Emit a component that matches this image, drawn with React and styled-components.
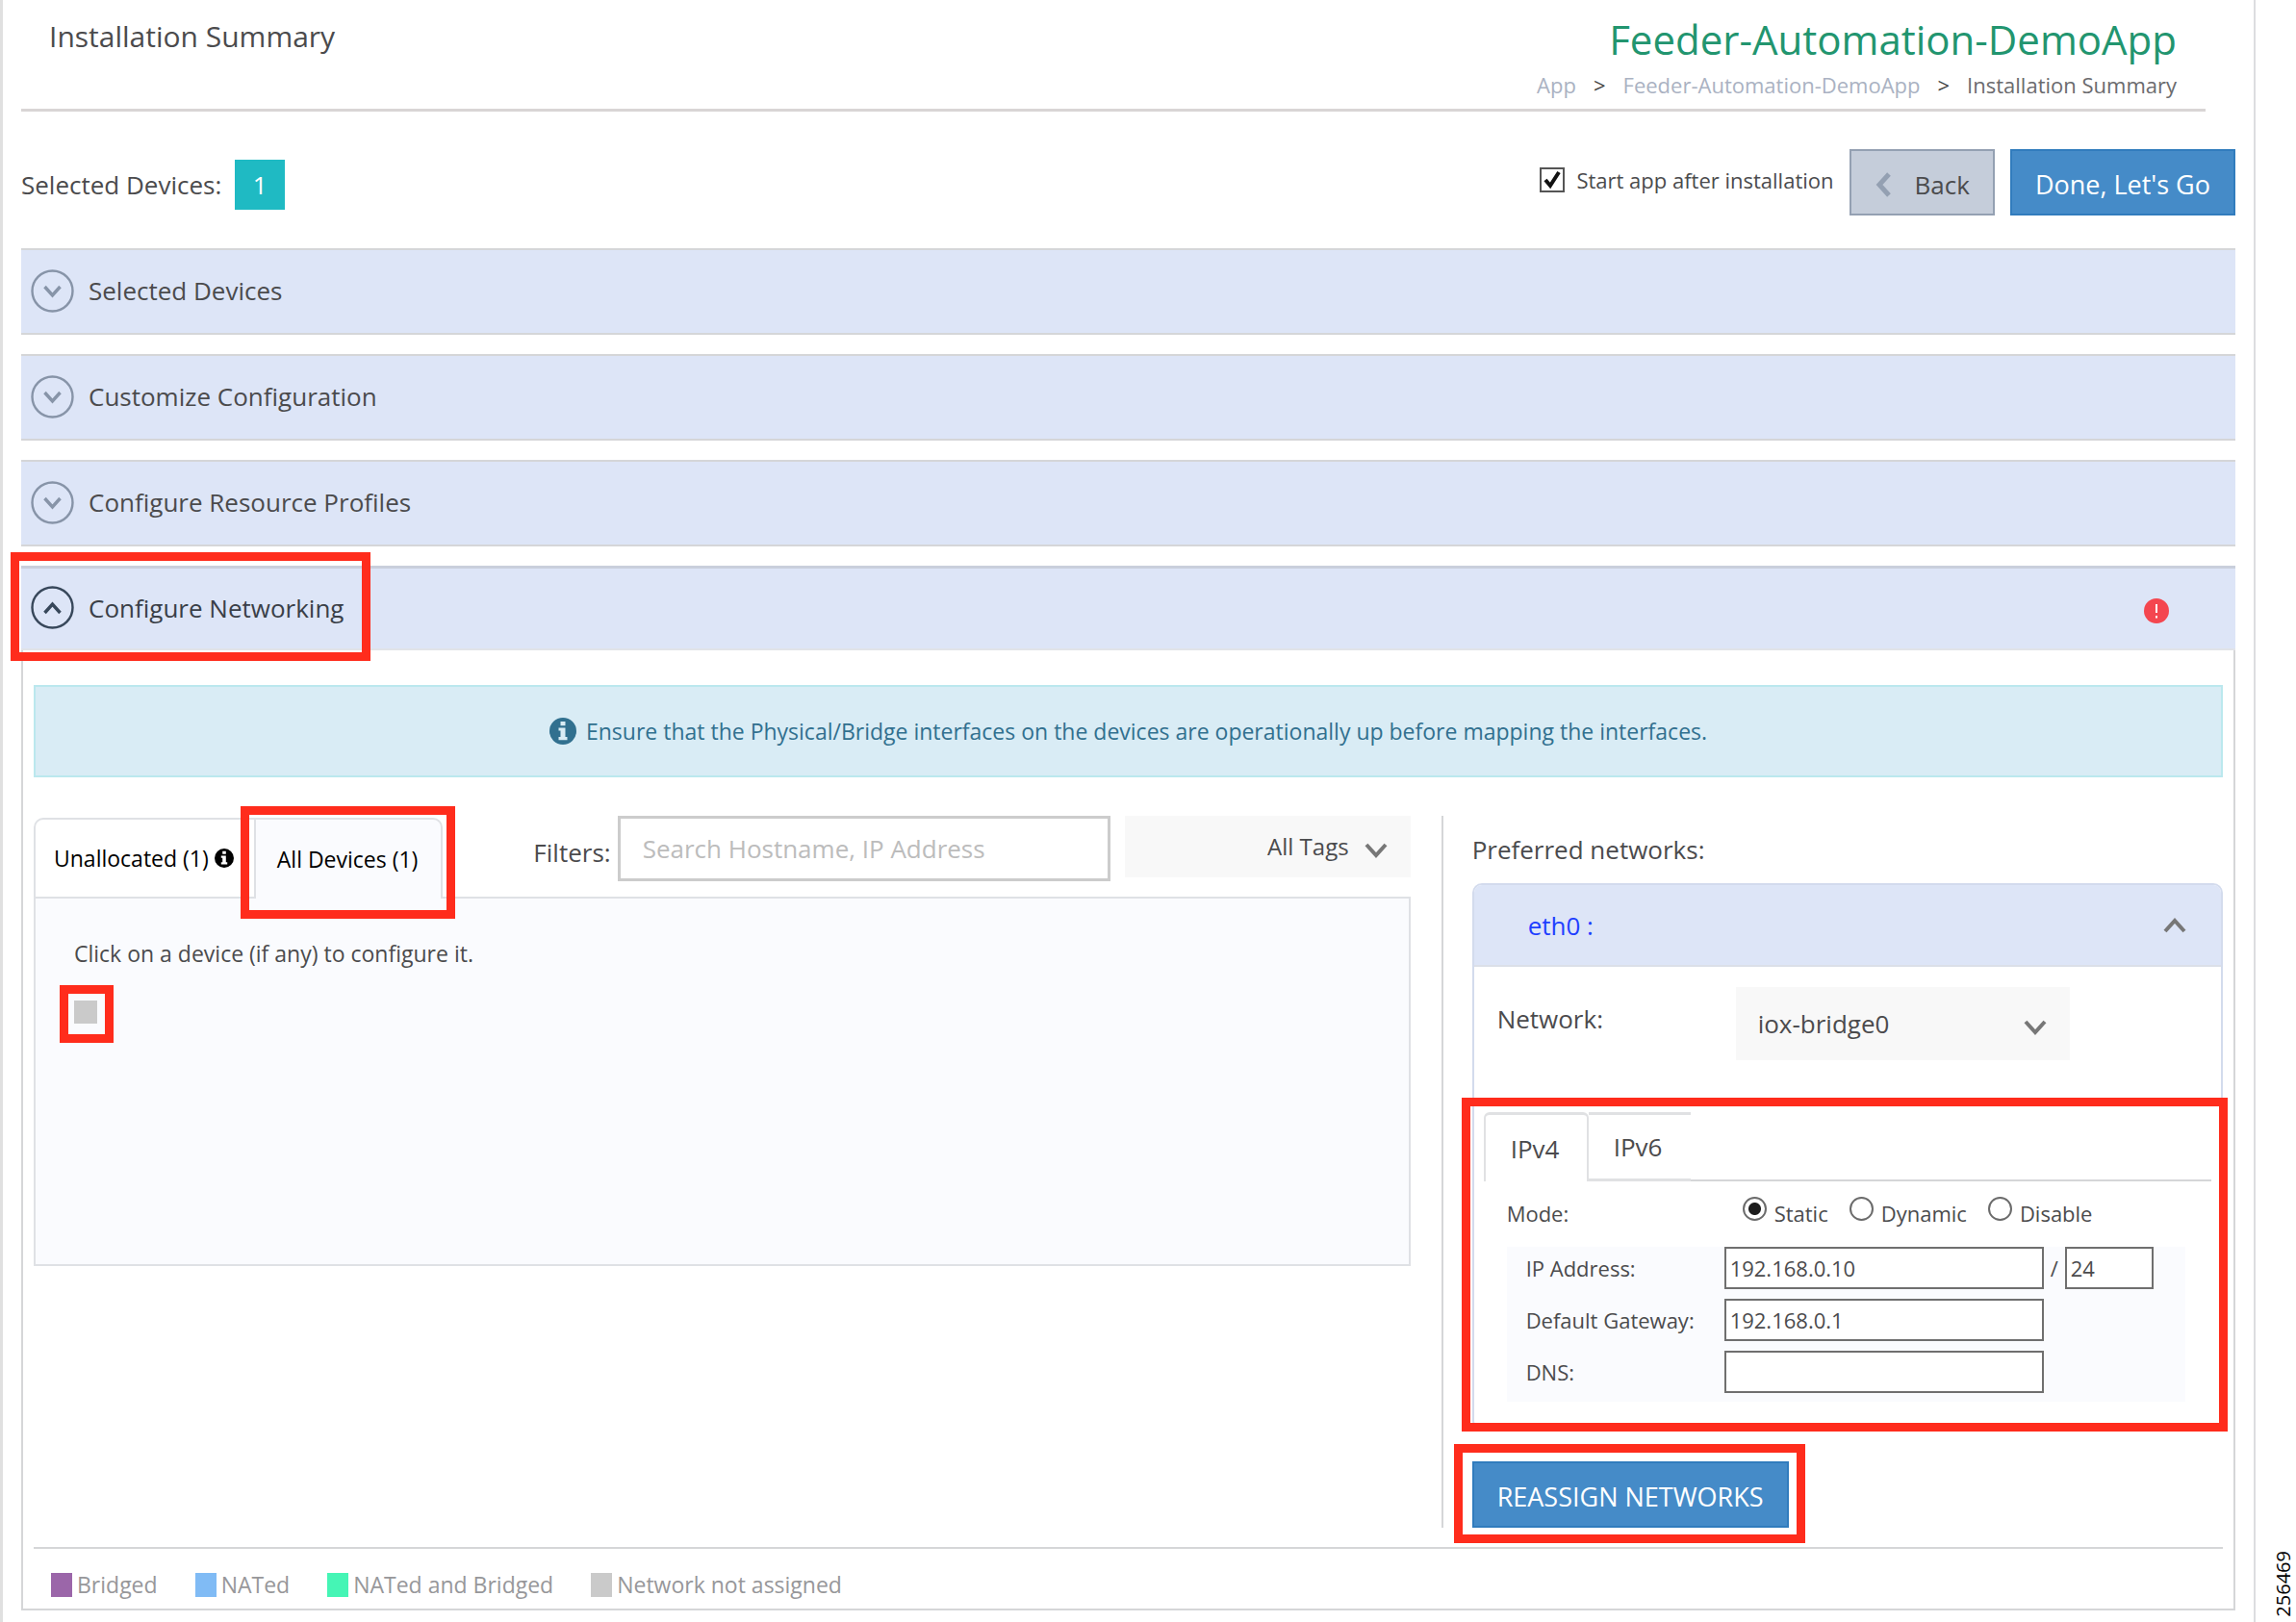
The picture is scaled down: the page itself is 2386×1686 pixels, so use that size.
import React, { useState } from "react";
import styled, { createGlobalStyle, css } from "styled-components";

const GlobalStyle = createGlobalStyle`
  *, *::before, *::after { box-sizing: border-box; }
  body {
    margin: 0;
    background: #fff;
    color: #4b4b4d;
    font-family: "Open Sans", "Noto Sans", sans-serif;
    font-size: 26px;
    line-height: 36px;
  }
  button, input, select { font: inherit; color: inherit; margin: 0; }
  button { cursor: pointer; }
`;

const Page = styled.div`
  display: flex;
  min-height: 100vh;
`;

const Frame = styled.main`
  flex: 1;
  min-width: 0;
  padding: 0 19px 12px;
  border-left: 3px solid #e0e0e0;
  border-right: 2px solid #dcdde0;
`;

const SideNote = styled.aside`
  width: 42px;
  padding: 0 0 5px 16px;
  display: flex;
  align-items: flex-end;
`;

const FigureNumber = styled.span`
  writing-mode: vertical-rl;
  transform: rotate(180deg);
  color: #000;
  font-size: 20px;
  line-height: 26px;
`;

/* Header */

const Header = styled.header`
  display: flex;
  justify-content: space-between;
  margin-right: 31px;
  padding: 11px 30px 10px 29px;
  border-bottom: 3px solid #d9d5d5;
`;

const PageTitle = styled.h1`
  margin: 7px 0 0;
  font-size: 30px;
  line-height: 40px;
  font-weight: 400;
`;

const AppHeading = styled.div`
  display: flex;
  flex-direction: column;
  align-items: flex-end;
  gap: 2px;
`;

const AppName = styled.h2`
  margin: 0;
  color: #22956f;
  font-size: 42px;
  line-height: 60px;
  font-weight: 400;
`;

const Breadcrumb = styled.nav`
  display: flex;
  gap: 18px;
  color: #6b6b6e;
  font-size: 22px;
  line-height: 30px;
`;

const CrumbLink = styled.a`
  color: #aab2c2;
  text-decoration: none;
`;

const CrumbArrow = styled.span`
  color: #444;
`;

/* Toolbar */

const Toolbar = styled.div`
  display: flex;
  justify-content: space-between;
  margin: 39px 0 34px;
`;

const DeviceCount = styled.div`
  display: flex;
  align-items: center;
  gap: 14px;
  padding-top: 4px;
`;

const Badge = styled.span`
  width: 52px;
  height: 52px;
  line-height: 52px;
  text-align: center;
  color: #fff;
  background: #1fbac3;
`;

const Actions = styled.div`
  display: flex;
  align-items: center;
  gap: 16px;
`;

const CheckLabel = styled.label`
  display: flex;
  align-items: center;
  gap: 12px;
  margin-bottom: 5px;
  font-size: 22px;
  line-height: 30px;
`;

const Checkbox = styled.input`
  appearance: none;
  width: 26px;
  height: 26px;
  border: 2px solid #555;
  background: #fff;
  &:checked {
    background: #fff
      url("data:image/svg+xml,%3Csvg xmlns='http://www.w3.org/2000/svg' viewBox='0 0 22 22'%3E%3Cpath d='M4 11l5 6 9-14' fill='none' stroke='%23111' stroke-width='4'/%3E%3C/svg%3E")
      center / 22px 22px no-repeat;
  }
`;

const Button = styled.button`
  display: flex;
  align-items: center;
  gap: 24px;
  height: 69px;
  padding: 4px 24px 0;
  border: 2px solid #317cbd;
  background: #458bc8;
  color: #fff;
  font-size: 27px;
  ${(p) =>
    p.$variant === "secondary" &&
    css`
      border-color: #94a0b2;
      background: #c5cdda;
      color: #4b4b4d;
      font-size: 26px;
    `}
`;

/* Accordion */

const Accordion = styled.div`
  display: flex;
  flex-direction: column;
  gap: 20px;
`;

const SectionHeader = styled.button`
  display: flex;
  align-items: center;
  gap: 15px;
  width: 100%;
  height: 90px;
  padding: 0 69px 2px 10px;
  border: solid #d5d6d8;
  border-width: 2px 0;
  background: #dde5f7;
  text-align: left;
  ${(p) =>
    p.$open &&
    css`
      height: 88px;
      border-top: 3px solid #c9cfdc;
      border-bottom-color: #e1e3e8;
      color: #3a3f48;
    `}
`;

const HeadingRow = styled.span`
  display: flex;
  align-items: center;
  gap: 15px;
`;

const ToggleIcon = styled.svg`
  width: 45px;
  height: 45px;
  flex: none;
  color: ${(p) => (p.$open ? "#37475a" : "#8794a8")};
`;

const ErrorIcon = styled.svg`
  width: 26px;
  height: 26px;
  margin: 7px 0 0 auto;
`;

const SectionBody = styled.section`
  padding: 36px 11px 0;
  border: 2px solid #d5d6d8;
  border-top: 0;
`;

const Highlighted = styled.div`
  position: relative;
  flex: none;
`;

const Highlight = styled.span`
  position: absolute;
  inset: ${(p) => p.$inset};
  z-index: 1;
  border: 9px solid #ff2c1c;
  pointer-events: none;
`;

const Notice = styled.p`
  display: flex;
  align-items: center;
  justify-content: center;
  gap: 10px;
  height: 96px;
  margin: 0;
  border: 2px solid #bbe8ee;
  background: #d9ecf5;
  color: #31708f;
  font-size: 23px;
`;

const InfoIcon = styled.svg`
  width: ${(p) => p.$size}px;
  height: ${(p) => p.$size}px;
  flex: none;
`;

const Columns = styled.div`
  display: grid;
  grid-template-columns: minmax(0, 1430fr) minmax(0, 812fr);
  gap: 32px;
  margin-top: 40px;
`;

/* Devices */

const DevicesBar = styled.div`
  display: flex;
  align-items: flex-start;
  justify-content: space-between;
  height: 84px;
`;

const DeviceTabs = styled.div`
  display: flex;
  align-self: flex-end;
  height: 82px;
`;

const DeviceTab = styled.button`
  display: flex;
  align-items: center;
  gap: 6px;
  height: ${(p) => (p.$active ? "84px" : "82px")};
  padding: ${(p) => (p.$active ? "0 24px 0 22px" : "0 21px 0 19px")};
  border: solid #dfe1e5;
  border-width: ${(p) => (p.$active ? "2px 2px 0" : "2px 0 0 2px")};
  border-radius: ${(p) => (p.$active ? "0 10px 0 0" : "10px 0 0 0")};
  background: ${(p) => (p.$active ? "#fafbfe" : "#fff")};
  color: #000;
  font-size: 23px;
`;

const Filters = styled.div`
  display: flex;
  align-items: flex-start;
  gap: 15px;
`;

const FilterLabel = styled.label`
  margin-right: -8px;
  line-height: 76px;
`;

const SearchInput = styled.input`
  width: 512px;
  height: 68px;
  padding: 0 23px;
  border: 3px solid #cccccc;
  background: #fff;
  &::placeholder { color: #bcbcbc; opacity: 1; }
`;

const SelectWrap = styled.span`
  display: grid;
  align-items: center;
  width: ${(p) => p.$width}px;
  height: ${(p) => p.$height}px;
  background: #f8f8f8;
  & > * { grid-area: 1 / 1; }
`;

const Select = styled.select`
  appearance: none;
  width: 100%;
  height: 100%;
  border: 0;
  background: transparent;
  padding: ${(p) => (p.$alignEnd ? "0 64px 0 20px" : "0 64px 0 23px")};
  text-align-last: ${(p) => (p.$alignEnd ? "right" : "left")};
  font-size: ${(p) => (p.$alignEnd ? "24px" : "26px")};
`;

const Chevron = styled.svg`
  width: 24px;
  height: 16px;
  justify-self: end;
  margin: 8px 24px 0 0;
  color: #777;
  pointer-events: none;
`;

const DevicePanel = styled.div`
  min-height: 384px;
  padding: 42px 40px;
  border: 2px solid #dfe1e5;
  background: #fafbfe;
  font-size: 23px;
  line-height: 30px;
`;

const Hint = styled.p`
  margin: 0 0 34px;
`;

const DeviceSlot = styled(Highlighted)`
  width: 24px;
  height: 24px;
`;

const DeviceButton = styled.button`
  display: block;
  width: 24px;
  height: 24px;
  padding: 0;
  border: 0;
  background: #cacaca;
`;

/* Preferred networks */

const Networks = styled.div`
  padding: 17px 0 0 30px;
  border-left: 2px solid #d5d6d8;
`;

const NetworksTitle = styled.h3`
  margin: 0 0 17px;
  font-size: 26px;
  font-weight: 400;
`;

const Card = styled.div`
  margin-bottom: 32px;
  border: 2px solid #d3dbed;
  border-radius: 10px;
`;

const CardHeader = styled.button`
  display: flex;
  align-items: center;
  justify-content: space-between;
  width: 100%;
  height: 85px;
  padding: 0 36px 0 56px;
  border: 0;
  border-bottom: 2px solid #dbdfe8;
  border-radius: 8px 8px 0 0;
  background: #dde5f7;
  color: #1f3fff;
`;

const CardChevron = styled(Chevron)`
  margin: 0;
`;

const NetworkRow = styled.div`
  display: flex;
  align-items: center;
  padding: 21px 24px 54px;
`;

const NetworkLabel = styled.label`
  width: 248px;
  padding-bottom: 10px;
`;

const IpSection = styled(Highlighted)`
  padding-bottom: 28px;
`;

const IpTabs = styled.div`
  display: flex;
  height: 72px;
  margin: 0 10px;
  box-shadow: inset 0 -2px #d5d6d8;
`;

const IpTab = styled.button`
  width: ${(p) => (p.$active ? "109px" : "106px")};
  padding: 0 0 0 26px;
  text-align: left;
  background: #fff;
  border: solid #e0e1e3;
  border-width: 3px 0;
  ${(p) =>
    p.$active &&
    css`
      border-width: 3px 2px 0;
      border-radius: 6px 6px 0 0;
    `}
`;

const ModeRow = styled.div`
  display: flex;
  align-items: center;
  height: 68px;
  padding: 0 0 2px 34px;
  font-size: 22px;
  line-height: 30px;
`;

const ModeLabel = styled.span`
  width: 245px;
`;

const RadioGroup = styled.div`
  display: flex;
  gap: 22px;
`;

const RadioLabel = styled.label`
  display: flex;
  align-items: center;
  gap: 8px;
`;

const Radio = styled.input`
  appearance: none;
  width: 25px;
  height: 25px;
  && { margin-bottom: 10px; }
  border: 2px solid #6b6b6b;
  border-radius: 50%;
  background: #fff;
  &:checked {
    background: radial-gradient(circle, #1c1c1c 0 6px, #fff 7px);
  }
`;

const AddressForm = styled.div`
  display: flex;
  flex-direction: column;
  gap: 10px;
  margin: 0 37px 0 34px;
  padding: 0 0 9px 20px;
  background: #fafbfe;
  font-size: 22px;
`;

const FieldRow = styled.div`
  display: flex;
  align-items: center;
  gap: 7px;
`;

const FieldLabel = styled.label`
  width: 199px;
`;

const Field = styled.input`
  width: ${(p) => (p.$short ? "92px" : "332px")};
  height: 44px;
  padding: 0 4px;
  border: 2px solid #6f6f6f;
  background: #fff;
`;

const ReassignWrap = styled(Highlighted)`
  width: max-content;
`;

/* Legend */

const Legend = styled.ul`
  display: flex;
  gap: 39px;
  margin: 20px 0 0;
  padding: 22px 18px 10px;
  border-top: 2px solid #d5d6d8;
  list-style: none;
  color: #97979a;
  font-size: 23px;
  line-height: 30px;
`;

const LegendItem = styled.li`
  display: flex;
  align-items: center;
  gap: 5px;
  &::before {
    content: "";
    width: 22px;
    height: 25px;
    background: ${(p) => p.$color};
  }
`;

const SECTIONS = ["Selected Devices", "Customize Configuration", "Configure Resource Profiles"];

const LEGEND = [
  { label: "Bridged", color: "#9b66a9" },
  { label: "NATed", color: "#80bbf5" },
  { label: "NATed and Bridged", color: "#45f5b5" },
  { label: "Network not assigned", color: "#cacaca" },
];

const MODES = ["Static", "Dynamic", "Disable"];

function Toggle({ open }) {
  return (
    <ToggleIcon $open={open} viewBox="0 0 45 45" fill="none" stroke="currentColor" aria-hidden="true">
      <circle cx="22.5" cy="22.5" r="21" strokeWidth="2.4" />
      <path d={open ? "M14.5 28l8-9 8 9" : "M14.5 18l8 9 8-9"} strokeWidth="3.4" />
    </ToggleIcon>
  );
}

function Info({ size }) {
  return (
    <InfoIcon $size={size} viewBox="0 0 28 28" aria-hidden="true">
      <path
        fill="currentColor"
        fillRule="evenodd"
        d="M14 0a14 14 0 1 1 0 28a14 14 0 1 1 0-28zM11.5 4v4.2h5V4zM9.5 10.5v3h2V20h-2v3.2h9V20h-2v-9.5z"
      />
    </InfoIcon>
  );
}

function Down() {
  return (
    <Chevron viewBox="0 0 24 16" fill="none" stroke="currentColor" strokeWidth="4" aria-hidden="true">
      <path d="M2 2l10 11L22 2" />
    </Chevron>
  );
}

export default function App() {
  const [mode, setMode] = useState("Static");
  const [startApp, setStartApp] = useState(true);

  return (
    <>
      <GlobalStyle />
      <Page>
        <Frame>
          <Header>
            <PageTitle>Installation Summary</PageTitle>
            <AppHeading>
              <AppName>Feeder-Automation-DemoApp</AppName>
              <Breadcrumb>
                <CrumbLink href="#app">App</CrumbLink>
                <CrumbArrow>&gt;</CrumbArrow>
                <CrumbLink href="#feeder">Feeder-Automation-DemoApp</CrumbLink>
                <CrumbArrow>&gt;</CrumbArrow>
                <span>Installation Summary</span>
              </Breadcrumb>
            </AppHeading>
          </Header>

          <Toolbar>
            <DeviceCount>
              Selected Devices:
              <Badge>1</Badge>
            </DeviceCount>
            <Actions>
              <CheckLabel>
                <Checkbox type="checkbox" checked={startApp} onChange={(e) => setStartApp(e.target.checked)} />
                Start app after installation
              </CheckLabel>
              <Button type="button" $variant="secondary">
                <svg width="18" height="26" viewBox="0 0 18 26" fill="none" stroke="#94a0b2" strokeWidth="5" aria-hidden="true">
                  <path d="M15 2L5 13l10 11" />
                </svg>
                Back
              </Button>
              <Button type="button">Done, Let's Go</Button>
            </Actions>
          </Toolbar>

          <Accordion>
            {SECTIONS.map((name) => (
              <SectionHeader key={name} type="button" aria-expanded="false">
                <Toggle />
                {name}
              </SectionHeader>
            ))}
            <div>
              <SectionHeader type="button" aria-expanded="true" $open>
                <Highlighted>
                  <HeadingRow>
                    <Toggle open />
                    Configure Networking
                  </HeadingRow>
                  <Highlight $inset="-35px -28px -33px -21px" />
                </Highlighted>
                <ErrorIcon viewBox="0 0 26 26" aria-hidden="true">
                  <circle cx="13" cy="13" r="13" fill="#f4464f" />
                  <path d="M13 6v9M13 18v2.5" stroke="#fff" strokeWidth="2" />
                </ErrorIcon>
              </SectionHeader>

              <SectionBody>
                <Notice>
                  <Info size={28} />
                  Ensure that the Physical/Bridge interfaces on the devices are operationally up before mapping the interfaces.
                </Notice>

                <Columns>
                  <div>
                    <DevicesBar>
                      <DeviceTabs>
                        <DeviceTab type="button">
                          Unallocated (1)
                          <Info size={20} />
                        </DeviceTab>
                        <Highlighted>
                          <DeviceTab type="button" $active>
                            All Devices (1)
                          </DeviceTab>
                          <Highlight $inset="-12px -13px -23px -14px" />
                        </Highlighted>
                      </DeviceTabs>
                      <Filters>
                        <FilterLabel htmlFor="search">Filters:</FilterLabel>
                        <SearchInput id="search" type="text" placeholder="Search Hostname, IP Address" />
                        <SelectWrap $width={297} $height={64}>
                          <Select aria-label="Tags" $alignEnd>
                            <option>All Tags</option>
                          </Select>
                          <Down />
                        </SelectWrap>
                      </Filters>
                    </DevicesBar>
                    <DevicePanel>
                      <Hint>Click on a device (if any) to configure it.</Hint>
                      <DeviceSlot>
                        <DeviceButton type="button" aria-label="Device" />
                        <Highlight $inset="-16px -17px -20px -15px" />
                      </DeviceSlot>
                    </DevicePanel>
                  </div>

                  <Networks>
                    <NetworksTitle>Preferred networks:</NetworksTitle>
                    <Card>
                      <CardHeader type="button" aria-expanded="true">
                        eth0 :
                        <CardChevron viewBox="0 0 24 16" fill="none" stroke="currentColor" strokeWidth="4" aria-hidden="true">
                          <path d="M2 14L12 3l10 11" />
                        </CardChevron>
                      </CardHeader>
                      <NetworkRow>
                        <NetworkLabel htmlFor="network">Network:</NetworkLabel>
                        <SelectWrap $width={347} $height={76}>
                          <Select id="network">
                            <option>iox-bridge0</option>
                          </Select>
                          <Down />
                        </SelectWrap>
                      </NetworkRow>
                      <IpSection>
                        <IpTabs>
                          <IpTab type="button" $active>IPv4</IpTab>
                          <IpTab type="button">IPv6</IpTab>
                        </IpTabs>
                        <ModeRow>
                          <ModeLabel id="mode-label">Mode:</ModeLabel>
                          <RadioGroup role="radiogroup" aria-labelledby="mode-label">
                            {MODES.map((m) => (
                              <RadioLabel key={m}>
                                <Radio type="radio" name="mode" checked={mode === m} onChange={() => setMode(m)} />
                                {m}
                              </RadioLabel>
                            ))}
                          </RadioGroup>
                        </ModeRow>
                        <AddressForm>
                          <FieldRow>
                            <FieldLabel htmlFor="ip">IP Address:</FieldLabel>
                            <Field id="ip" type="text" defaultValue="192.168.0.10" />
                            <span>/</span>
                            <Field type="text" aria-label="Prefix length" defaultValue="24" $short />
                          </FieldRow>
                          <FieldRow>
                            <FieldLabel htmlFor="gateway">Default Gateway:</FieldLabel>
                            <Field id="gateway" type="text" defaultValue="192.168.0.1" />
                          </FieldRow>
                          <FieldRow>
                            <FieldLabel htmlFor="dns">DNS:</FieldLabel>
                            <Field id="dns" type="text" />
                          </FieldRow>
                        </AddressForm>
                        <Highlight $inset="-15px -7px -3px -13px" />
                      </IpSection>
                    </Card>
                    <ReassignWrap>
                      <Button type="button">REASSIGN NETWORKS</Button>
                      <Highlight $inset="-18px -17px -16px -19px" />
                    </ReassignWrap>
                  </Networks>
                </Columns>

                <Legend>
                  {LEGEND.map(({ label, color }) => (
                    <LegendItem key={label} $color={color}>
                      {label}
                    </LegendItem>
                  ))}
                </Legend>
              </SectionBody>
            </div>
          </Accordion>
        </Frame>
        <SideNote>
          <FigureNumber>256469</FigureNumber>
        </SideNote>
      </Page>
    </>
  );
}
